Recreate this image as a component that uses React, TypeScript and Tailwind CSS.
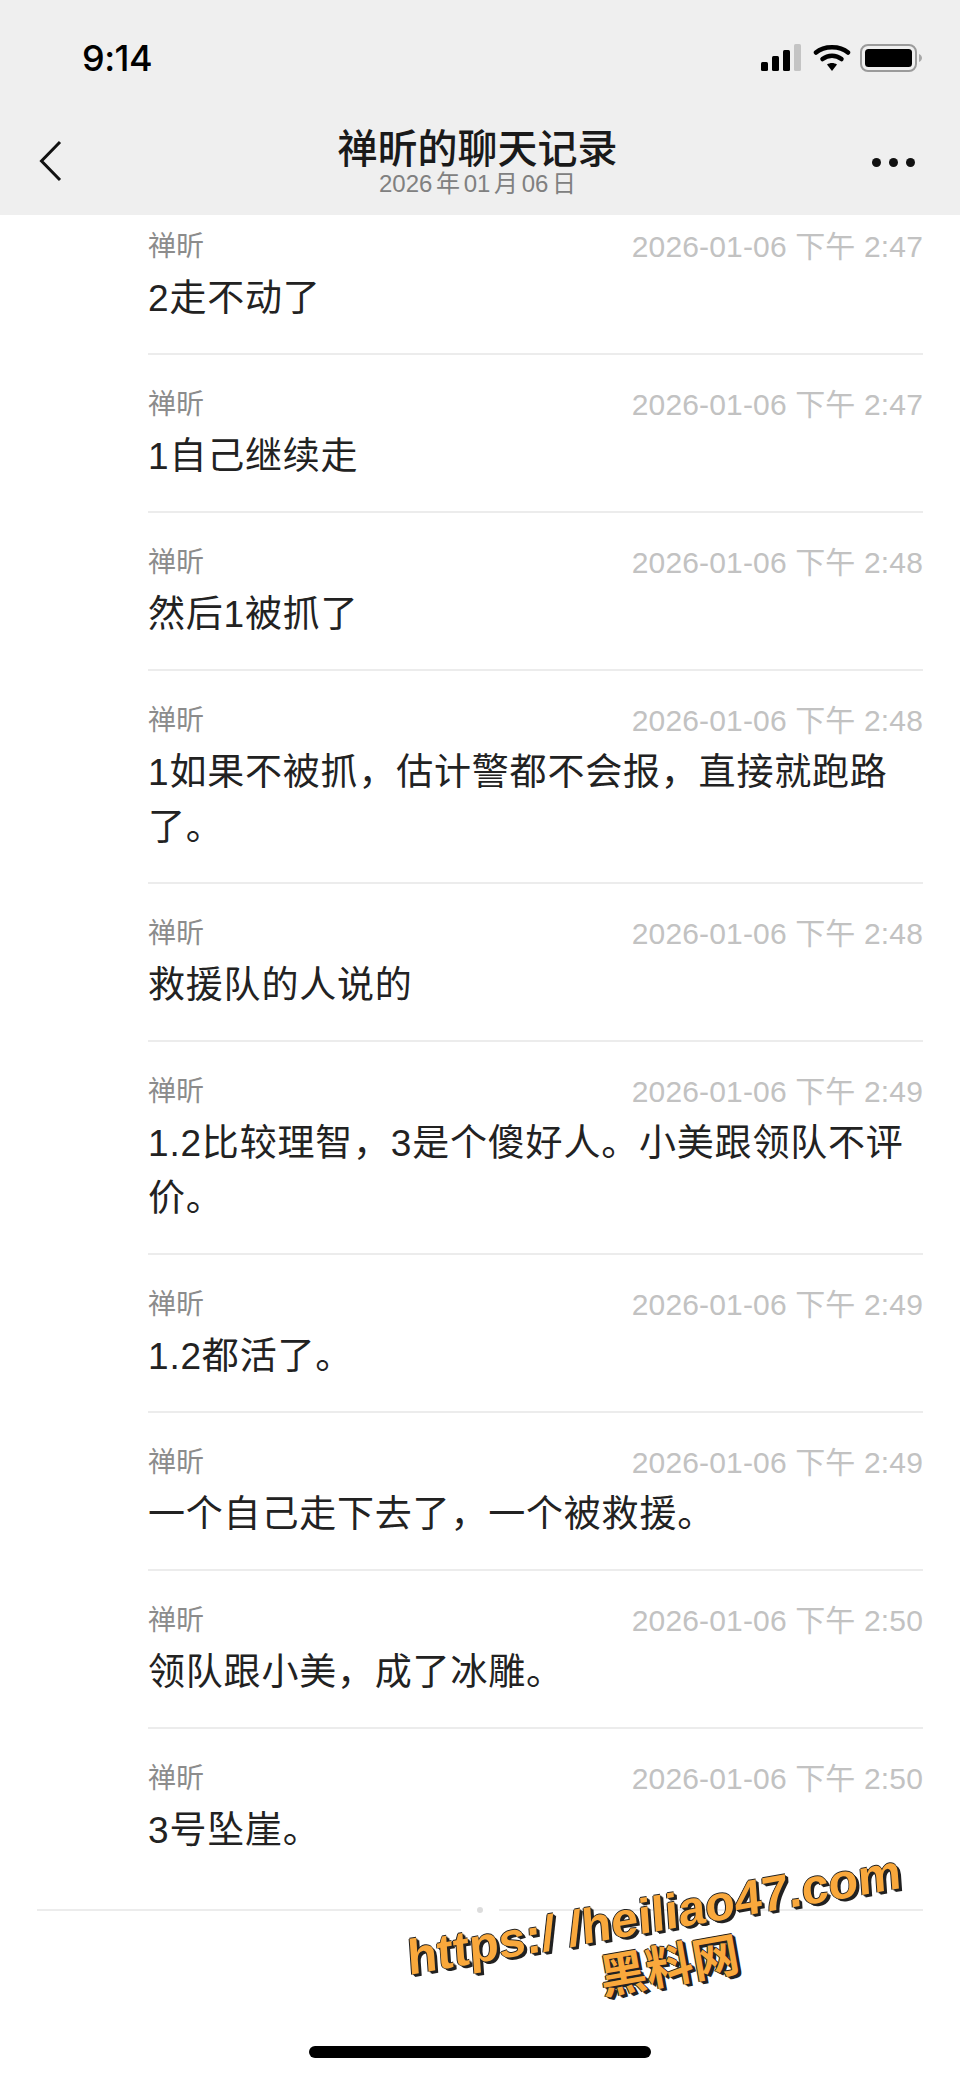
const fontStack = "font-['Liberation_Sans','Noto_Sans_CJK_SC',sans-serif]"

type Msg = { time: string; lines: string[] }

const messages: Msg[] = [
  { time: '2:47', lines: ['2走不动了'] },
  { time: '2:47', lines: ['1自己继续走'] },
  { time: '2:48', lines: ['然后1被抓了'] },
  { time: '2:48', lines: ['1如果不被抓，估计警都不会报，直接就跑路', '了。'] },
  { time: '2:48', lines: ['救援队的人说的'] },
  { time: '2:49', lines: ['1.2比较理智，3是个傻好人。小美跟领队不评', '价。'] },
  { time: '2:49', lines: ['1.2都活了。'] },
  { time: '2:49', lines: ['一个自己走下去了，一个被救援。'] },
  { time: '2:50', lines: ['领队跟小美，成了冰雕。'] },
  { time: '2:50', lines: ['3号坠崖。'] },
]

function StatusIcons() {
  return (
    <div className="flex items-center gap-[9px]">
      <svg width="44" height="28" viewBox="0 0 44 28">
        <rect x="1" y="18" width="7" height="9" rx="1.500" fill="#000" />
        <rect x="12" y="12" width="7" height="15" rx="1.500" fill="#000" />
        <rect x="23" y="6" width="7" height="21" rx="1.500" fill="#000" />
        <rect x="34" y="0" width="7" height="27" rx="1.500" fill="#c4c4c4" />
      </svg>
      <svg width="38" height="28" viewBox="0 0 38 28">
        <path d="M3 8.500C11 1.500 27 1.500 35 8.500" fill="none" stroke="#000" strokeWidth="4.500" strokeLinecap="round" />
        <path d="M9.500 15c5.500-4.500 13.500-4.500 19 0" fill="none" stroke="#000" strokeWidth="4.500" strokeLinecap="round" />
        <path d="M14 20.500c3-2 7-2 10 0L19 27z" fill="#000" />
      </svg>
      <svg width="62" height="28" viewBox="0 0 62 28">
        <rect x="1" y="1" width="55" height="26" rx="7" fill="none" stroke="#9b9b9b" strokeWidth="2" />
        <rect x="5" y="5" width="47" height="18" rx="3.500" fill="#000" />
        <path d="M59 10c2 1 3 2.500 3 4s-1 3-3 4z" fill="#a8a8a8" />
      </svg>
    </div>
  )
}

function Header() {
  return (
    <header className="relative z-10 h-[215px] bg-[#efefef]">
      <div className="flex h-[114px] items-start justify-between pl-[82px] pr-[38px] pt-[41px]">
        <span className="text-[36px] leading-[34px] font-medium tracking-[-0.5px] text-black font-['Inter',sans-serif]">9:14</span>
        <div className="mt-[3px]">
          <StatusIcons />
        </div>
      </div>
      <div className="relative flex flex-col items-center pr-[5px]">
        <div className="mt-[12px] text-[40px] leading-[46px] text-[#1a1a1a] font-medium">禅昕的聊天记录</div>
        <div className="text-[24px] leading-[24px] text-[#808080] [word-spacing:-3px]">2026 年 01 月 06 日</div>
        <svg className="absolute left-[38px] top-[26px]" width="26" height="42" viewBox="0 0 26 42">
          <path d="M22 2 3.500 21 22 40" fill="none" stroke="#111" strokeWidth="3" />
        </svg>
        <div className="absolute right-[45px] top-[44px] flex gap-[8px]">
          <span className="h-[9px] w-[9px] rounded-full bg-[#111]" />
          <span className="h-[9px] w-[9px] rounded-full bg-[#111]" />
          <span className="h-[9px] w-[9px] rounded-full bg-[#111]" />
        </div>
      </div>
    </header>
  )
}

function MessageRow({ msg }: { msg: Msg }) {
  return (
    <div className="border-b-2 border-[#ececec] pt-[35px] pb-[27px]">
      <div className="flex items-center justify-between">
        <span className="text-[28px] leading-[30px] text-[#8c8c8c]">禅昕</span>
        <span className="text-[30px] leading-[30px] tracking-[0.15px] text-[#c2c2c2]">2026-01-06 下午 {msg.time}</span>
      </div>
      <div className="mt-[9px] text-[37px] leading-[55px] tracking-[0.8px] text-[#222]">
        {msg.lines.map(l => (
          <div key={l}>{l}</div>
        ))}
      </div>
    </div>
  )
}

export default function App() {
  return (
    <div className={`relative h-[2080px] w-[960px] overflow-hidden bg-white ${fontStack}`}>
      <Header />
      <div className="-mt-[18px] pl-[148px] pr-[37px]">
        {messages.map((m, i) => (
          <div key={i} className={i === messages.length - 1 ? '[&>div]:border-b-0' : ''}>
            <MessageRow msg={m} />
          </div>
        ))}
      </div>

      <div className="mt-[22px] flex items-center px-[37px]">
        <div className="h-[2px] flex-1 bg-[#ececec]" />
        <div className="mx-[16px] h-[6px] w-[6px] rounded-full bg-[#dcdcdc]" />
        <div className="h-[2px] flex-1 bg-[#ececec]" />
      </div>

      {/* watermark */}
      <div className="absolute left-[389px] top-[1888px] w-[540px] -rotate-[10deg] text-center font-bold text-[#f9a83c] [text-shadow:1px_1px_0_#222,2px_2px_0_#222,3px_3px_0_#222,-1px_0_0_#222,0_-1px_0_#222]">
        <div className="whitespace-nowrap text-[49px] leading-[52px] -skew-x-6">https:/ /heiliao47.com</div>
        <div className="ml-[12px] text-[47px] leading-[56px]">黑料网</div>
      </div>

      <div className="absolute bottom-[22px] left-[309px] h-[12px] w-[342px] rounded-full bg-black" />
    </div>
  )
}
